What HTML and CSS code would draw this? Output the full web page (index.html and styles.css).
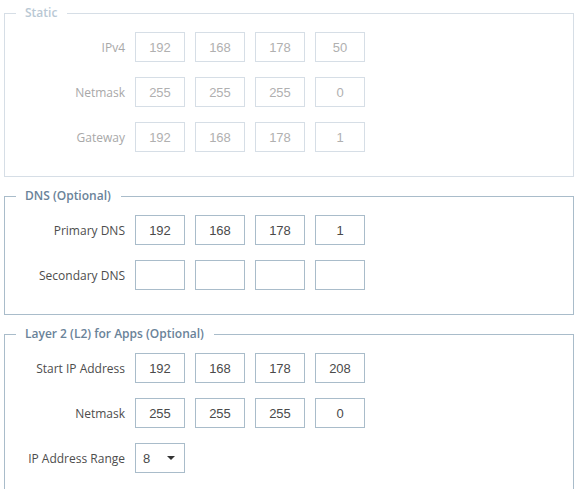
FILE: index.html
```html
<!DOCTYPE html>
<html>
<head>
<meta charset="utf-8">
<link rel="stylesheet" href="styles.css">
</head>
<body>
<div class="page">
  <fieldset class="group disabled">
    <legend>Static</legend>
    <div class="row">
      <label class="lbl">IPv4</label>
      <div class="octets"><span class="oct">192</span><span class="oct">168</span><span class="oct">178</span><span class="oct">50</span></div>
    </div>
    <div class="row">
      <label class="lbl">Netmask</label>
      <div class="octets"><span class="oct">255</span><span class="oct">255</span><span class="oct">255</span><span class="oct">0</span></div>
    </div>
    <div class="row">
      <label class="lbl">Gateway</label>
      <div class="octets"><span class="oct">192</span><span class="oct">168</span><span class="oct">178</span><span class="oct">1</span></div>
    </div>
  </fieldset>

  <fieldset class="group">
    <legend>DNS (Optional)</legend>
    <div class="row">
      <label class="lbl">Primary DNS</label>
      <div class="octets"><span class="oct">192</span><span class="oct">168</span><span class="oct">178</span><span class="oct">1</span></div>
    </div>
    <div class="row">
      <label class="lbl">Secondary DNS</label>
      <div class="octets"><span class="oct"></span><span class="oct"></span><span class="oct"></span><span class="oct"></span></div>
    </div>
  </fieldset>

  <fieldset class="group">
    <legend>Layer 2 (L2) for Apps (Optional)</legend>
    <div class="row">
      <label class="lbl">Start IP Address</label>
      <div class="octets"><span class="oct">192</span><span class="oct">168</span><span class="oct">178</span><span class="oct">208</span></div>
    </div>
    <div class="row">
      <label class="lbl">Netmask</label>
      <div class="octets"><span class="oct">255</span><span class="oct">255</span><span class="oct">255</span><span class="oct">0</span></div>
    </div>
    <div class="row">
      <label class="lbl">IP Address Range</label>
      <div class="select"><span class="sel-val">8</span><span class="caret"></span></div>
    </div>
  </fieldset>
</div>
</body>
</html>
```
FILE: styles.css
```css
html, body {
  margin: 0;
  padding: 0;
  background: #ffffff;
}
.page {
  padding: 4px 0 0 4px;
  width: 570px;
  font-family: "Open Sans", "Noto Sans", sans-serif;
}
.group {
  margin: 0 0 10px 0;
  padding: 10px 0 24px 0;
  border: 1px solid #a9bcca;
  min-width: 0;
}
.group legend {
  margin-left: 11px;
  padding: 0 10px 0 9px;
  font-size: 12px;
  line-height: 18px;
  font-weight: 600;
  color: #6a8399;
}
.row {
  display: flex;
  align-items: center;
  gap: 10px;
  margin-bottom: 15px;
}
.row:last-child {
  margin-bottom: 0;
}
.lbl {
  width: 120px;
  text-align: right;
  font-size: 12px;
  color: #4d4d4d;
}
.octets {
  display: flex;
  gap: 10px;
}
.oct {
  box-sizing: border-box;
  width: 50px;
  height: 30px;
  border: 1px solid #a9bcca;
  display: flex;
  align-items: center;
  justify-content: center;
  font-family: "Liberation Sans", Arial, sans-serif;
  font-size: 13px;
  color: #4a4a4a;
}
.select {
  box-sizing: border-box;
  width: 50px;
  height: 30px;
  border: 1px solid #a9bcca;
  display: flex;
  align-items: center;
  justify-content: space-between;
  padding: 0 9px 0 7px;
  font-family: "Liberation Sans", Arial, sans-serif;
  font-size: 13px;
  color: #4a4a4a;
}
.caret {
  width: 0;
  height: 0;
  border-left: 4px solid transparent;
  border-right: 4px solid transparent;
  border-top: 4px solid #333;
}
.disabled {
  border-color: #d6dee6;
}
.disabled legend {
  color: #b9c8d4;
}
.disabled .lbl {
  color: #a8a8a8;
}
.disabled .oct {
  border-color: #d6dee6;
  color: #b0b0b0;
}
```
